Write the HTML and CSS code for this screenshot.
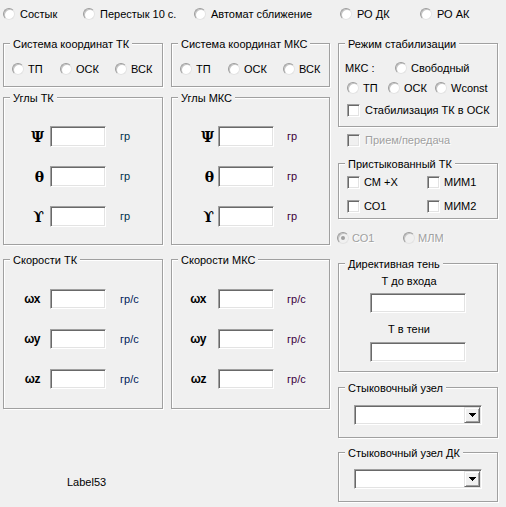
FILE: index.html
```html
<!DOCTYPE html>
<html>
<head>
<meta charset="utf-8">
<title>Form</title>
<link rel="stylesheet" href="styles.css">
</head>
<body>
<div class="toprow">
  <label class="opt top w80"><span class="radio"></span>Состык</label>
  <label class="opt top w111"><span class="radio"></span>Перестык 10 с.</label>
  <label class="opt top w146"><span class="radio"></span>Автомат сближение</label>
  <label class="opt top w80"><span class="radio"></span>РО ДК</label>
  <label class="opt top"><span class="radio"></span>РО АК</label>
</div>

<div class="cols">
  <div class="col">
    <div class="group g-sys">
      <span class="cap">Система координат ТК</span>
      <div class="sysrow">
        <label class="opt w48"><span class="radio"></span>ТП</label>
        <label class="opt w55"><span class="radio"></span>ОСК</label>
        <label class="opt"><span class="radio"></span>ВСК</label>
      </div>
    </div>
    <div class="group g-ang tk">
      <span class="cap">Углы ТК</span>
      <div class="vrow"><span class="lbl gl">Ψ</span><span class="tb val"></span><span class="unit">гр</span></div>
      <div class="vrow"><span class="lbl gl">θ</span><span class="tb val"></span><span class="unit">гр</span></div>
      <div class="vrow"><span class="lbl gl">ϒ</span><span class="tb val"></span><span class="unit">гр</span></div>
    </div>
    <div class="group g-spd tk">
      <span class="cap">Скорости ТК</span>
      <div class="vrow"><span class="lbl wl">ωx</span><span class="tb val"></span><span class="unit">гр/с</span></div>
      <div class="vrow"><span class="lbl wl">ωy</span><span class="tb val"></span><span class="unit">гр/с</span></div>
      <div class="vrow"><span class="lbl wl">ωz</span><span class="tb val"></span><span class="unit">гр/с</span></div>
    </div>
    <div class="note">Label53</div>
  </div>

  <div class="col mid">
    <div class="group g-sys">
      <span class="cap">Система координат МКС</span>
      <div class="sysrow">
        <label class="opt w48"><span class="radio"></span>ТП</label>
        <label class="opt w55"><span class="radio"></span>ОСК</label>
        <label class="opt"><span class="radio"></span>ВСК</label>
      </div>
    </div>
    <div class="group g-ang mks">
      <span class="cap">Углы МКС</span>
      <div class="vrow"><span class="lbl gl">Ψ</span><span class="tb val"></span><span class="unit">гр</span></div>
      <div class="vrow"><span class="lbl gl">θ</span><span class="tb val"></span><span class="unit">гр</span></div>
      <div class="vrow"><span class="lbl gl">ϒ</span><span class="tb val"></span><span class="unit">гр</span></div>
    </div>
    <div class="group g-spd mks">
      <span class="cap">Скорости МКС</span>
      <div class="vrow"><span class="lbl wl">ωx</span><span class="tb val"></span><span class="unit">гр/с</span></div>
      <div class="vrow"><span class="lbl wl">ωy</span><span class="tb val"></span><span class="unit">гр/с</span></div>
      <div class="vrow"><span class="lbl wl">ωz</span><span class="tb val"></span><span class="unit">гр/с</span></div>
    </div>
  </div>

  <div class="col right">
    <div class="group g-mode">
      <span class="cap">Режим стабилизации</span>
      <div class="mrow r1">
        <span class="opt w50">МКС :</span>
        <label class="opt"><span class="radio"></span>Свободный</label>
      </div>
      <div class="mrow r2">
        <label class="opt w41"><span class="radio"></span>ТП</label>
        <label class="opt w47"><span class="radio"></span>ОСК</label>
        <label class="opt"><span class="radio"></span>Wconst</label>
      </div>
      <div class="mrow r3">
        <label class="opt"><span class="cb"></span>Стабилизация ТК в ОСК</label>
      </div>
    </div>

    <label class="opt disabled recv"><span class="cb off"></span>Прием/передача</label>

    <div class="group g-dock">
      <span class="cap">Пристыкованный ТК</span>
      <div class="drow">
        <label class="opt w80"><span class="cb"></span>СМ +Х</label>
        <label class="opt"><span class="cb"></span>МИМ1</label>
      </div>
      <div class="drow second">
        <label class="opt w80"><span class="cb"></span>СО1</label>
        <label class="opt"><span class="cb"></span>МИМ2</label>
      </div>
    </div>

    <div class="mods">
      <label class="opt disabled w66"><span class="radio off on"></span>СО1</label>
      <label class="opt disabled"><span class="radio off"></span>МЛМ</label>
    </div>

    <div class="group g-shadow">
      <span class="cap">Директивная тень</span>
      <div class="dlabel">Т до входа</div>
      <span class="tb wide first"></span>
      <div class="dlabel second">Т в тени</div>
      <span class="tb wide last"></span>
    </div>

    <div class="group g-node">
      <span class="cap">Стыковочный узел</span>
      <div class="combo"><span class="drop"><svg width="7" height="4" viewBox="0 0 7 4"><polygon points="0,0 7,0 3.5,4" fill="#000"/></svg></span></div>
    </div>

    <div class="group g-node dk">
      <span class="cap">Стыковочный узел ДК</span>
      <div class="combo"><span class="drop"><svg width="7" height="4" viewBox="0 0 7 4"><polygon points="0,0 7,0 3.5,4" fill="#000"/></svg></span></div>
    </div>
  </div>
</div>
</body>
</html>
```

FILE: styles.css
```css
* { box-sizing: border-box; }
html, body { margin: 0; padding: 0; }
body {
  background: #f0f0f0;
  color: #000;
  font-family: "Liberation Sans", Arial, sans-serif;
  font-size: 11px;
  line-height: 13px;
  width: 506px;
  height: 507px;
  overflow: hidden;
}

/* generic option (radio / checkbox + text) */
.opt { display: flex; align-items: center; height: 16px; white-space: nowrap; flex: none; }
.radio {
  flex: none;
  position: relative;
  width: 12px; height: 12px;
  border-radius: 50%;
  background: #fff;
  border: 1px solid;
  border-color: #9c9c9c #e3e3e3 #e3e3e3 #9c9c9c;
  box-shadow: inset 1px 1px 0 #c4c4c4;
  margin-right: 4px;
}
.top .radio { margin-right: 5px; }
.radio.off { background: #f0f0f0; }
.radio.on::after {
  content: "";
  position: absolute;
  left: 3px; top: 3px;
  width: 4px; height: 4px;
  border-radius: 50%;
  background: #a0a0a0;
}
.cb {
  flex: none;
  width: 13px; height: 13px;
  background: #fff;
  border: 1px solid;
  border-color: #a0a0a0 #fff #fff #a0a0a0;
  box-shadow: inset 1px 1px 0 #696969, inset -1px -1px 0 #e3e3e3;
  margin-right: 4px;
}
.cb.off { background: #f0f0f0; }
.disabled { color: #a0a0a0; text-shadow: 1px 1px 0 #fff; }

.w41 { width: 41px; }
.w47 { width: 47px; }
.w48 { width: 48px; }
.w50 { width: 50px; }
.w55 { width: 55px; }
.w66 { width: 66px; }
.w80 { width: 80px; }
.w111 { width: 111px; }
.w146 { width: 146px; }

/* top row */
.toprow { display: flex; align-items: center; height: 28px; padding-left: 3px; }

/* columns */
.cols { display: flex; gap: 8px; padding-left: 3px; }
.col { display: flex; flex-direction: column; width: 160px; flex: none; }
.col.mid { width: 159px; }

/* group boxes */
.group {
  position: relative;
  border: 1px solid #a0a0a0;
  box-shadow: inset 1px 1px 0 #fff, 1px 1px 0 #fff;
}
.cap {
  position: absolute;
  top: -6px; left: 6px;
  padding: 0 3px;
  background: #f0f0f0;
  line-height: 13px;
  white-space: nowrap;
}

/* sunken text box */
.tb {
  display: block;
  background: #fff;
  border: 1px solid;
  border-color: #a0a0a0 #fff #fff #a0a0a0;
  box-shadow: inset 1px 1px 0 #696969, inset -1px -1px 0 #e3e3e3;
  flex: none;
}

/* coordinate system groups */
.g-sys { margin-top: 15px; height: 44px; padding: 17px 0 0 8px; }
.sysrow { display: flex; }

/* value groups */
.g-ang { margin-top: 10px; height: 148px; padding-top: 28px; }
.g-spd { margin-top: 14px; height: 150px; padding-top: 29px; }
.vrow { display: flex; align-items: center; height: 21px; }
.vrow + .vrow { margin-top: 19px; }
.g-spd .vrow { height: 20px; }
.g-spd .vrow + .vrow { margin-top: 20px; }
.val { width: 56px; height: 21px; }
.g-spd .val { height: 20px; }
.lbl { text-align: right; flex: none; }
.gl { font-family: "DejaVu Serif", "Liberation Serif", serif; font-weight: bold; font-size: 14px; line-height: 16px; }
.wl { font-family: "Liberation Sans", Arial, sans-serif; font-weight: bold; font-size: 12px; line-height: 14px; letter-spacing: -0.5px; }

.g-ang.tk .lbl { width: 40px; margin-right: 6px; }
.g-ang.mks .lbl { width: 42px; margin-right: 4px; }
.g-spd.tk .lbl { width: 36px; margin-right: 10px; }
.g-spd.mks .lbl { width: 34px; margin-right: 12px; }
.tk .unit { margin-left: 14px; }
.mks .unit { margin-left: 13px; }
.g-ang.tk .unit { color: #00304a; }
.g-spd.tk .unit { color: #001a5a; }
.g-ang.mks .unit { color: #3c0038; }
.g-spd.mks .unit { color: #3c0040; }

.note { margin-top: 67px; padding-left: 64px; line-height: 13px; }

/* right column */
.g-mode { margin-top: 15px; height: 84px; padding: 16px 0 0 0; }
.mrow { display: flex; }
.mrow.r1 { padding-left: 6px; }
.mrow.r2 { padding-left: 8px; margin-top: 4px; }
.mrow.r3 { padding-left: 8px; margin-top: 6px; }
.mrow.r3 .cb { margin-right: 5px; }

.recv { margin-top: 5px; padding-left: 9px; }
.recv .cb { margin-right: 5px; }

.g-dock { margin-top: 15px; height: 56px; padding: 10px 0 0 8px; }
.drow { display: flex; }
.drow.second { margin-top: 8px; }

.mods { display: flex; margin-top: 11px; margin-left: -1px; }
.mods .radio { margin-right: 3px; }

.g-shadow { margin-top: 17px; height: 109px; padding-top: 11px; }
.dlabel { width: 140px; text-align: center; line-height: 13px; }
.dlabel.second { margin-top: 10px; }
.wide { width: 96px; height: 20px; margin-left: 31px; }
.wide.first { margin-top: 5px; }
.wide.last { margin-top: 6px; }

.g-node { margin-top: 15px; height: 51px; padding: 17px 0 0 15px; }
.g-node.dk { margin-top: 14px; height: 50px; padding-top: 16px; }
.combo {
  display: flex;
  justify-content: flex-end;
  width: 128px; height: 20px;
  padding: 1px;
  background: #fff;
  border: 1px solid;
  border-color: #a0a0a0 #fff #fff #a0a0a0;
  box-shadow: inset 1px 1px 0 #696969, inset -1px -1px 0 #e3e3e3;
}
.drop {
  display: flex; align-items: center; justify-content: center;
  width: 16px; height: 16px;
  background: #f0f0f0;
  border: 1px solid;
  border-color: #e3e3e3 #696969 #696969 #e3e3e3;
  box-shadow: inset 1px 1px 0 #fff, inset -1px -1px 0 #a0a0a0;
}
.drop svg { display: block; shape-rendering: crispEdges; }
```
